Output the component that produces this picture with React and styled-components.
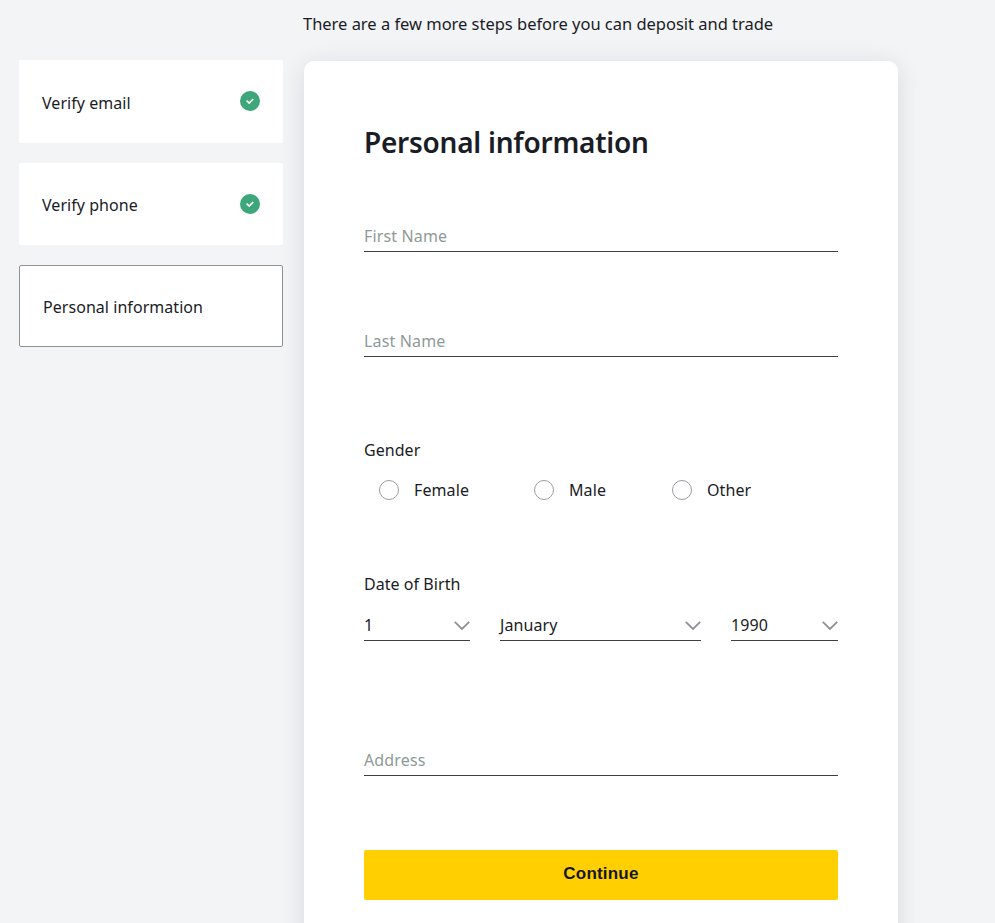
import React from "react";
import styled, { createGlobalStyle } from "styled-components";

const GlobalStyle = createGlobalStyle`
  html, body {
    margin: 0;
    height: 923px;
    overflow: hidden;
    background-color: #f3f4f6;
  }
  body {
    font-family: "Noto Sans", "Open Sans", sans-serif;
    color: #1a1c26;
  }
`;

const Page = styled.div`
  height: 923px;
  overflow: hidden;
  padding: 0 0 0 19px;
`;

const Intro = styled.p`
  margin: 0 0 0 284px;
  height: 60px;
  padding-top: 12px;
  box-sizing: border-box;
  font-size: 16.5px;
  line-height: 24px;
  letter-spacing: -0.02px;
`;

const Columns = styled.div`
  display: grid;
  grid-template-columns: 264px 594px;
  column-gap: 21px;
  align-items: start;
`;

const Steps = styled.div`
  display: flex;
  flex-direction: column;
  gap: 20px;
`;

const Step = styled.div`
  box-sizing: border-box;
  height: ${(p) => p.$height}px;
  display: flex;
  align-items: center;
  justify-content: space-between;
  padding: 0 23px;
  background-color: #fff;
  border-radius: 2px;
  border: ${(p) => (p.$active ? "1px solid #8f9197" : "none")};
  font-size: 16px;
  letter-spacing: 0.05px;
`;

const StepLabel = styled.span`
  padding-top: 2px;
`;

const Badge = styled.svg`
  margin-bottom: 1px;
`;

const Card = styled.main`
  box-sizing: border-box;
  margin-top: 1px;
  height: 960px;
  padding: 60px 60px 0;
  background-color: #fff;
  border-radius: 10px;
  box-shadow: 0 4px 24px rgba(30, 35, 50, 0.12);
`;

const Title = styled.h1`
  margin: 0 0 63px;
  font-size: 28px;
  line-height: 42px;
  font-weight: 600;
  letter-spacing: -0.25px;
`;

const TextField = styled.div`
  box-sizing: border-box;
  height: 26px;
  margin-top: ${(p) => p.$top}px;
  border-bottom: 1px solid #3c3e44;
  font-size: 16px;
  line-height: 20px;
  color: #8f9a98;
  letter-spacing: 0.15px;
`;

const Label = styled.div`
  margin-top: ${(p) => p.$top}px;
  font-size: 16px;
  line-height: 24px;
  letter-spacing: 0.05px;
`;

const Radios = styled.div`
  display: flex;
  margin-top: 18px;
  padding-left: 15px;
`;

const Radio = styled.label`
  display: flex;
  align-items: center;
  width: ${(p) => p.$width}px;
  height: 20px;
  font-size: 16px;
  letter-spacing: 0.1px;
`;

const RadioDot = styled.span`
  box-sizing: border-box;
  width: 20px;
  height: 20px;
  margin-right: 15px;
  border: 1.5px solid #9a9ca2;
  border-radius: 50%;
`;

const DateRow = styled.div`
  display: grid;
  grid-template-columns: 106px 201px 107px;
  column-gap: 30px;
  margin-top: 15px;
`;

const Select = styled.div`
  box-sizing: border-box;
  height: 30px;
  padding-bottom: 1px;
  display: flex;
  align-items: center;
  justify-content: space-between;
  border-bottom: 1px solid #3c3e44;
  font-size: 16px;
  letter-spacing: 0.1px;
`;

const Button = styled.button`
  display: block;
  width: 100%;
  height: 50px;
  margin-top: 74px;
  padding: 0 0 2px;
  border: none;
  border-radius: 2px;
  background-color: #ffcf01;
  color: #14161f;
  font-family: "Liberation Sans", Arial, sans-serif;
  font-size: 17px;
  font-weight: 700;
  letter-spacing: 0.2px;
  cursor: pointer;
`;

const CheckBadge = () => (
  <Badge width="20" height="20" viewBox="0 0 20 20" aria-hidden="true">
    <circle cx="10" cy="10" r="10" fill="#3ea67b" />
    <path d="M6.6 9.6 9.2 12l4-4" fill="none" stroke="#fff" strokeWidth="1.7" />
  </Badge>
);

const Chevron = () => (
  <svg width="16" height="9" viewBox="0 0 16 9" aria-hidden="true">
    <path d="M.8.8 8 8l7.2-7.2" fill="none" stroke="#8f9197" strokeWidth="1.8" />
  </svg>
);

export default function App() {
  return (
    <Page>
      <GlobalStyle />
      <Intro>There are a few more steps before you can deposit and trade</Intro>
      <Columns>
        <Steps>
          <Step $height={83}>
            <StepLabel>Verify email</StepLabel>
            <CheckBadge />
          </Step>
          <Step $height={82}>
            <StepLabel>Verify phone</StepLabel>
            <CheckBadge />
          </Step>
          <Step $height={82} $active>
            <StepLabel>Personal information</StepLabel>
          </Step>
        </Steps>
        <Card>
          <Title>Personal information</Title>
          <TextField $top={0}>First Name</TextField>
          <TextField $top={79}>Last Name</TextField>
          <Label $top={81}>Gender</Label>
          <Radios>
            <Radio $width={155}>
              <RadioDot />
              Female
            </Radio>
            <Radio $width={138}>
              <RadioDot />
              Male
            </Radio>
            <Radio $width={100}>
              <RadioDot />
              Other
            </Radio>
          </Radios>
          <Label $top={72}>Date of Birth</Label>
          <DateRow>
            <Select>
              1
              <Chevron />
            </Select>
            <Select>
              January
              <Chevron />
            </Select>
            <Select>
              1990
              <Chevron />
            </Select>
          </DateRow>
          <TextField $top={109}>Address</TextField>
          <Button>Continue</Button>
        </Card>
      </Columns>
    </Page>
  );
}
